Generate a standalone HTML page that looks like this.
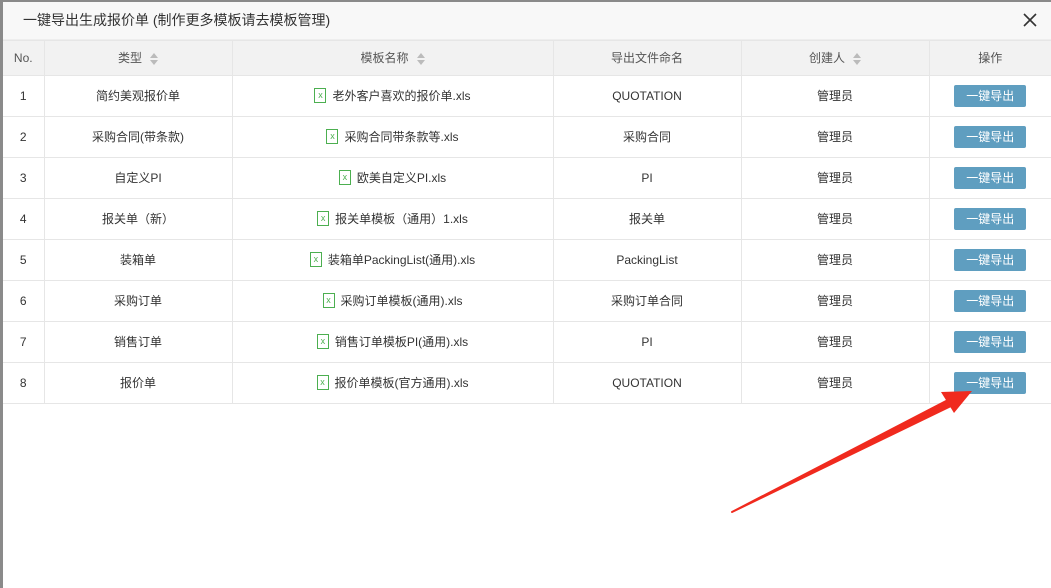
<!DOCTYPE html>
<html><head><meta charset="utf-8"><style>
body{margin:0;width:1051px;height:588px;overflow:hidden;background:#fff;font-family:"Liberation Sans","Noto Sans CJK SC",sans-serif;font-size:12px;color:#333;position:relative}
.bd{position:absolute;left:0;top:0;width:1051px;height:588px;background:#8a8a8a}
.dlg{position:absolute;left:3px;top:2px;width:1048px;height:586px;background:#fff}
.title{height:37px;background:#f8f8f8;border-bottom:1px solid #eee;line-height:37px;padding-left:20px;font-size:14px;color:#333;position:relative}
.x{position:absolute;right:14px;top:11px;width:14px;height:14px}
table{border-collapse:collapse;width:1048px;table-layout:fixed}
th,td{border:1px solid #e6e6e6;text-align:center;padding:0;font-weight:normal;line-height:16px}
th{height:34px;background:#f2f2f2;color:#555}
td{height:40px;color:#333}
tr>*:first-child{border-left:none}
tr>*:last-child{border-right:none}
.s{display:inline-block;margin-left:8px;vertical-align:middle;width:8px;height:12px;position:relative}
.s:before,.s:after{content:"";position:absolute;left:0;border-left:4px solid transparent;border-right:4px solid transparent}
.s:before{top:0;border-bottom:5px solid #bbb}
.s:after{bottom:0;border-top:5px solid #bbb}
.ic{display:inline-block;width:10px;height:13px;border:1px solid #4caf50;vertical-align:middle;margin-right:6px;margin-top:-3px;font-size:9px;color:#4caf50;line-height:12px}
.b{display:inline-block;width:72px;height:22px;line-height:22px;background:#5f9ec0;color:#fff;border-radius:2px;font-size:12px;vertical-align:middle}
</style></head><body>
<div class="bd"></div>
<div class="dlg">
<div class="title">一键导出生成报价单 (制作更多模板请去模板管理)<svg class="x" viewBox="0 0 14 14"><path d="M1 1L13 13M13 1L1 13" stroke="#333" stroke-width="1.6"/></svg></div>
<table>
<colgroup><col style="width:41px"><col style="width:188px"><col style="width:321px"><col style="width:188px"><col style="width:188px"><col></colgroup>
<tr><th>No.</th><th>类型<span class="s"></span></th><th>模板名称<span class="s"></span></th><th>导出文件命名</th><th>创建人<span class="s"></span></th><th>操作</th></tr>
<tr><td>1</td><td>简约美观报价单</td><td><span class="ic">x</span>老外客户喜欢的报价单.xls</td><td>QUOTATION</td><td>管理员</td><td><span class="b">一键导出</span></td></tr>
<tr><td>2</td><td>采购合同(带条款)</td><td><span class="ic">x</span>采购合同带条款等.xls</td><td>采购合同</td><td>管理员</td><td><span class="b">一键导出</span></td></tr>
<tr><td>3</td><td>自定义PI</td><td><span class="ic">x</span>欧美自定义PI.xls</td><td>PI</td><td>管理员</td><td><span class="b">一键导出</span></td></tr>
<tr><td>4</td><td>报关单（新）</td><td><span class="ic">x</span>报关单模板（通用）1.xls</td><td>报关单</td><td>管理员</td><td><span class="b">一键导出</span></td></tr>
<tr><td>5</td><td>装箱单</td><td><span class="ic">x</span>装箱单PackingList(通用).xls</td><td>PackingList</td><td>管理员</td><td><span class="b">一键导出</span></td></tr>
<tr><td>6</td><td>采购订单</td><td><span class="ic">x</span>采购订单模板(通用).xls</td><td>采购订单合同</td><td>管理员</td><td><span class="b">一键导出</span></td></tr>
<tr><td>7</td><td>销售订单</td><td><span class="ic">x</span>销售订单模板PI(通用).xls</td><td>PI</td><td>管理员</td><td><span class="b">一键导出</span></td></tr>
<tr><td>8</td><td>报价单</td><td><span class="ic">x</span>报价单模板(官方通用).xls</td><td>QUOTATION</td><td>管理员</td><td><span class="b">一键导出</span></td></tr>
</table>
</div>
<svg style="position:absolute;left:0;top:0" width="1051" height="588">
<path d="M732 512L948 400L951 406Z" fill="#f02a1e" stroke="#f02a1e" stroke-width="2" stroke-linejoin="round"/>
<polygon points="972,391 941,392 954,413" fill="#f02a1e"/>
</svg>
</body></html>
